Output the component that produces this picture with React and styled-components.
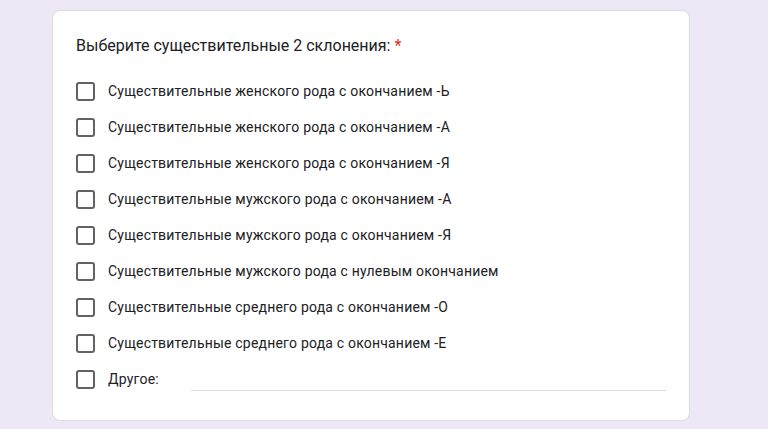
import React from 'react';
import styled, { createGlobalStyle } from 'styled-components';

const GlobalStyle = createGlobalStyle`
  html, body {
    margin: 0;
    padding: 0;
    background: #ede7f6;
  }
  body {
    font-family: Roboto, "Liberation Sans", Arial, sans-serif;
  }
`;

const options = [
  'Существительные женского рода с окончанием -Ь',
  'Существительные женского рода с окончанием -А',
  'Существительные женского рода с окончанием -Я',
  'Существительные мужского рода с окончанием -А',
  'Существительные мужского рода с окончанием -Я',
  'Существительные мужского рода с нулевым окончанием',
  'Существительные среднего рода с окончанием -О',
  'Существительные среднего рода с окончанием -Е',
];

function App() {
  return (
    <Page>
      <GlobalStyle />
      <Card>
        <Question>
          Выберите существительные 2 склонения: <Required>*</Required>
        </Question>
        <List>
          {options.map((text) => (
            <Option key={text}>
              <Box />
              <Label>{text}</Label>
            </Option>
          ))}
          <Option>
            <Box />
            <Label>Другое:</Label>
            <OtherInput />
          </Option>
        </List>
      </Card>
    </Page>
  );
}

const Page = styled.div`
  min-height: 429px;
  padding: 10px 0 0 52px;
  box-sizing: border-box;
`;

const Card = styled.div`
  width: 638px;
  box-sizing: border-box;
  background: #fff;
  border: 1px solid #dadce0;
  border-radius: 8px;
  padding: 23px 23px 23px;
`;

const Question = styled.div`
  font-size: 16px;
  line-height: 24px;
  color: #202124;
  margin-bottom: 15px;
`;

const Required = styled.span`
  color: #d93025;
`;

const List = styled.div`
  display: flex;
  flex-direction: column;
`;

const Option = styled.div`
  display: flex;
  align-items: center;
  height: 36px;
`;

const Box = styled.div`
  width: 19px;
  height: 19px;
  box-sizing: border-box;
  border: 2px solid #5f6368;
  border-radius: 3px;
  flex-shrink: 0;
  margin-right: 13px;
`;

const Label = styled.span`
  font-size: 14px;
  color: #202124;
  letter-spacing: 0.2px;
`;

const OtherInput = styled.div`
  flex: 1;
  margin-left: 32px;
  align-self: flex-end;
  height: 11px;
  border-bottom: 1px solid #dadce0;
  margin-bottom: 6px;
`;

export default App;
